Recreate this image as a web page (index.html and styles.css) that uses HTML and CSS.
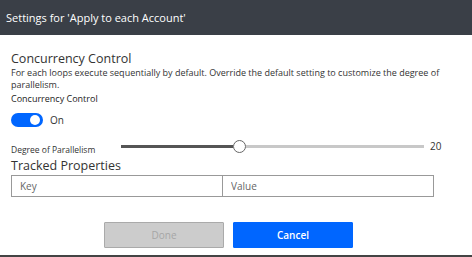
FILE: index.html
```html
<!DOCTYPE html>
<html lang="en">
<head>
  <meta charset="UTF-8">
  <meta name="viewport" content="width=device-width, initial-scale=1.0">
  <title>Settings</title>
  <link rel="stylesheet" href="styles.css">
</head>
<body>
  <div class="panel">
    <div class="panel-header">Settings for 'Apply to each Account'</div>

    <div class="panel-body">
      <div class="section-title">Concurrency Control</div>
      <div class="description">For each loops execute sequentially by default. Override the default setting to customize the degree of parallelism.</div>
      <div class="field-label">Concurrency Control</div>

      <div class="toggle-row">
        <span class="toggle"><span class="toggle-knob"></span></span>
        <span class="toggle-text">On</span>
      </div>

      <div class="slider-row">
        <span class="slider-label">Degree of Parallelism</span>
        <div class="slider">
          <div class="slider-fill"></div>
          <div class="slider-thumb"></div>
          <div class="slider-rest"></div>
        </div>
        <span class="slider-value">20</span>
      </div>

      <div class="section-title tracked">Tracked Properties</div>
      <div class="props">
        <input class="prop-input" type="text" placeholder="Key">
        <input class="prop-input" type="text" placeholder="Value">
      </div>

      <div class="actions">
        <button class="btn btn-disabled" disabled>Done</button>
        <button class="btn btn-primary">Cancel</button>
      </div>
    </div>
  </div>
</body>
</html>
```

FILE: styles.css
```css
body {
  margin: 0;
  font-family: 'Open Sans', 'Noto Sans', sans-serif;
  background-color: #fff;
  color: #333;
}

.panel {
  width: 472px;
  height: 257px;
  box-sizing: border-box;
  border-bottom: 2px solid #444;
  overflow: hidden;
}

.panel-header {
  height: 35px;
  background-color: #3a3f47;
  color: #fff;
  font-size: 11px;
  line-height: 35px;
  padding-left: 6px;
}

.panel-body {
  padding: 15px 11px 0 11px;
}

.section-title {
  font-size: 12.5px;
  line-height: 17px;
  color: #333;
}

.description {
  font-size: 9px;
  line-height: 12px;
  color: #333;
  padding-right: 20px;
}

.field-label {
  font-size: 9px;
  line-height: 12px;
  color: #222;
  margin-top: 2px;
}

.toggle-row {
  display: flex;
  align-items: center;
  gap: 7px;
  margin-top: 8px;
  height: 14px;
}

.toggle {
  width: 32px;
  height: 14px;
  border-radius: 7px;
  background-color: #0066ff;
  position: relative;
}

.toggle-knob {
  position: absolute;
  right: 3px;
  top: 2px;
  width: 10px;
  height: 10px;
  border-radius: 50%;
  background-color: #fff;
}

.toggle-text {
  font-size: 10px;
  color: #333;
}

.slider-row {
  display: flex;
  align-items: center;
  margin-top: 12px;
  height: 14px;
}

.slider-label {
  width: 110px;
  font-size: 8.5px;
  color: #333;
  margin-top: 6px;
}

.slider {
  display: flex;
  align-items: center;
  width: 303px;
}

.slider-fill {
  width: 112px;
  height: 3px;
  background-color: #555;
}

.slider-thumb {
  width: 11px;
  height: 11px;
  border: 1px solid #666;
  border-radius: 50%;
  background-color: #fff;
}

.slider-rest {
  flex: 1;
  height: 3px;
  background-color: #c8c8c8;
}

.slider-value {
  font-size: 10px;
  color: #333;
  margin-left: 6px;
}

.tracked {
  margin-top: 4px;
}

.props {
  display: flex;
  margin-top: 1px;
}

.prop-input {
  width: 212px;
  height: 22px;
  box-sizing: border-box;
  border: 1px solid #999;
  padding: 0 8px;
  font-family: inherit;
  font-size: 10px;
  color: #333;
  outline: none;
}

.prop-input + .prop-input {
  margin-left: -1px;
}

.prop-input::placeholder {
  color: #666;
}

.actions {
  display: flex;
  justify-content: center;
  gap: 9px;
  margin-top: 25px;
  padding-right: 15px;
}

.btn {
  width: 120px;
  height: 26px;
  font-family: inherit;
  font-size: 10px;
  border-radius: 1px;
  cursor: pointer;
}

.btn-disabled {
  background-color: #ccc;
  border: 1px solid #aaa;
  color: #a6a6a6;
}

.btn-primary {
  background-color: #0066ff;
  border: 1px solid #0066ff;
  color: #fff;
  font-weight: 600;
}
```
